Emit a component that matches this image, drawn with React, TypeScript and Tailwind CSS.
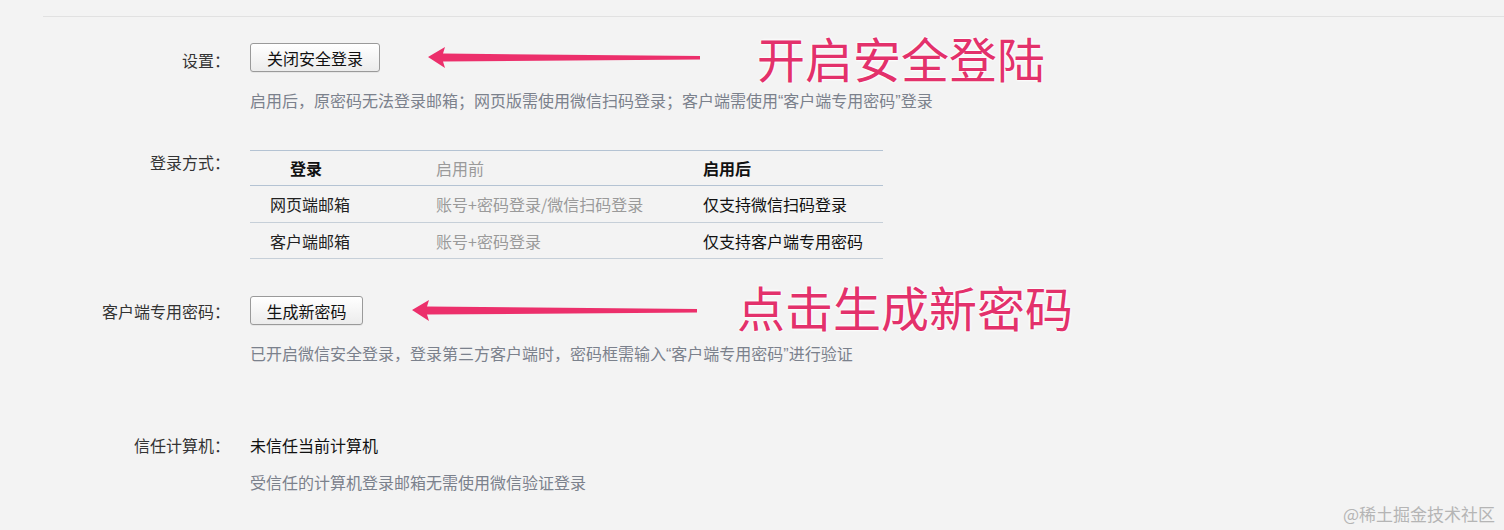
import React from 'react';

const font = { fontFamily: '"Noto Sans CJK SC", "Noto Sans", sans-serif' };

const Arrow: React.FC<{ width: number }> = ({ width }) => (
  <svg width={width} height={24} viewBox={`0 0 ${width} 24`} className="block">
    <polygon
      points={`0,11 17,1 15,7.5 ${width},10 ${width},13.5 15,15.5 17,22`}
      fill="#ec2f6b"
    />
  </svg>
);

const Note: React.FC<{ text: string }> = ({ text }) => (
  <span
    className="text-[48px] leading-none text-[#e3316b] whitespace-nowrap"
    style={{ textShadow: '0 0 3px #fff, 0 0 3px #fff, 0 0 2px #fff' }}
  >
    {text}
  </span>
);

const Q: React.FC<{ children: React.ReactNode }> = ({ children }) => (
  <span className="inline-block font-['Liberation_Sans',sans-serif] leading-none">{children}</span>
);

const Btn: React.FC<{ children: React.ReactNode; w: string }> = ({ children, w }) => (
  <button
    className={`${w} h-[29px] rounded-[3px] border border-[#9a9a9a] bg-gradient-to-b from-white to-[#ececec] text-[16px] leading-none text-[#111] shadow-[0_1px_0_rgba(0,0,0,0.05)]`}
  >
    {children}
  </button>
);

const Label: React.FC<{ children: React.ReactNode }> = ({ children }) => (
  <div className="w-[230px] shrink-0 text-right text-[16px] text-[#333]">{children}</div>
);

const Desc: React.FC<{ children: React.ReactNode; mt: string }> = ({ children, mt }) => (
  <div className={`ml-[250px] ${mt} h-[22px] overflow-visible whitespace-nowrap text-[16px] leading-[22px] text-[#7b818c]`}>
    {children}
  </div>
);

export default function App() {
  return (
    <div className="min-h-screen w-full bg-[#f3f3f3] overflow-hidden relative" style={font}>
      <div className="ml-[43px] h-[17px] border-b border-[#e1e1e1]" />

      {/* 设置 */}
      <div className="mt-[26px] flex items-center h-[29px] relative">
        <div className="pt-[5px]">
          <Label>设置：</Label>
        </div>
        <div className="ml-[20px]">
          <Btn w="w-[130px]">关闭安全登录</Btn>
        </div>
        <div className="absolute left-[428px] top-[3px]">
          <Arrow width={272} />
        </div>
        <div className="absolute left-[757px] top-[-10px]">
          <Note text="开启安全登陆" />
        </div>
      </div>
      <Desc mt="mt-[17px]">
        启用后，原密码无法登录邮箱；网页版需使用微信扫码登录；客户端需使用<Q>“</Q>客户端专用密码<Q>”</Q>登录
      </Desc>

      {/* 登录方式 */}
      <div className="mt-[39px] flex items-start">
        <Label>登录方式：</Label>
        <div className="ml-[20px] w-[633px] text-[16px]">
          <div className="grid grid-cols-[166px_267px_200px] h-[36px] items-center border-t border-b border-[#b4c3d3]">
            <div className="pl-[40px] font-bold text-[#111]">登录</div>
            <div className="pl-[20px] text-[#9a9a9a]">启用前</div>
            <div className="pl-[20px] font-semibold text-[#111]">启用后</div>
          </div>
          <div className="grid grid-cols-[166px_267px_200px] h-[37px] items-center border-b border-[#c6cfd8]">
            <div className="pl-[20px] text-[#222]">网页端邮箱</div>
            <div className="pl-[20px] text-[#9a9a9a]">账号+密码登录/微信扫码登录</div>
            <div className="pl-[20px] text-[#111]">仅支持微信扫码登录</div>
          </div>
          <div className="grid grid-cols-[166px_267px_200px] h-[36px] items-center border-b border-[#c6cfd8]">
            <div className="pl-[20px] text-[#222]">客户端邮箱</div>
            <div className="pl-[20px] text-[#9a9a9a]">账号+密码登录</div>
            <div className="pl-[20px] text-[#111]">仅支持客户端专用密码</div>
          </div>
        </div>
      </div>

      {/* 客户端专用密码 */}
      <div className="mt-[37px] flex items-center h-[29px] relative">
        <div className="pt-[1px]">
          <Label>客户端专用密码：</Label>
        </div>
        <div className="ml-[20px]">
          <Btn w="w-[113px]">生成新密码</Btn>
        </div>
        <div className="absolute left-[412px] top-[3px]">
          <Arrow width={285} />
        </div>
        <div className="absolute left-[737px] top-[-14px]">
          <Note text="点击生成新密码" />
        </div>
      </div>
      <Desc mt="mt-[17px]">
        已开启微信安全登录，登录第三方客户端时，密码框需输入<Q>“</Q>客户端专用密码<Q>”</Q>进行验证
      </Desc>

      {/* 信任计算机 */}
      <div className="mt-[70px] flex items-center h-[22px]">
        <Label>信任计算机：</Label>
        <div className="ml-[20px] text-[16px] text-[#111]">未信任当前计算机</div>
      </div>
      <Desc mt="mt-[15px]">受信任的计算机登录邮箱无需使用微信验证登录</Desc>

      <div className="absolute right-[9px] bottom-[8px] text-[17px] leading-none text-[#b5b5b5]">
        @稀土掘金技术社区
      </div>
    </div>
  );
}
